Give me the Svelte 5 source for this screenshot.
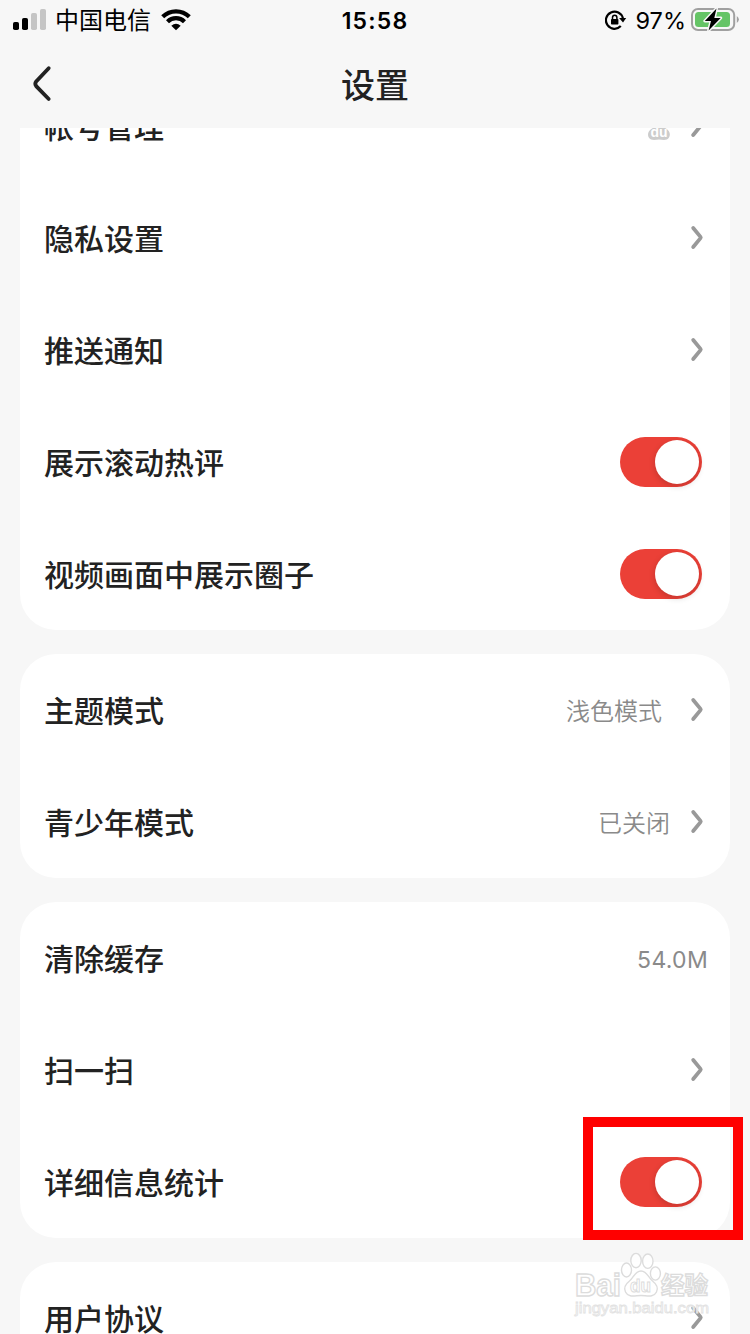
<script lang="ts">
  type Row = { label: string, kind: 'link' | 'toggle' | 'value', value?: string, wide?: boolean, baidu?: boolean, marked?: boolean };

  const groups: Row[][] = [
    [
      { label: '帐号管理', kind: 'link', baidu: true },
      { label: '隐私设置', kind: 'link' },
      { label: '推送通知', kind: 'link' },
      { label: '展示滚动热评', kind: 'toggle' },
      { label: '视频画面中展示圈子', kind: 'toggle' },
    ],
    [
      { label: '主题模式', kind: 'link', value: '浅色模式', wide: true },
      { label: '青少年模式', kind: 'link', value: '已关闭' },
    ],
    [
      { label: '清除缓存', kind: 'value', value: '54.0M' },
      { label: '扫一扫', kind: 'link' },
      { label: '详细信息统计', kind: 'toggle', marked: true },
    ],
    [
      { label: '用户协议', kind: 'link' },
    ],
  ];
</script>

<div class="screen">
  <div class="statusbar">
    <div class="carrier">
      <svg width="34" height="22" viewBox="0 0 34 22">
        <rect x="0" y="13" width="6" height="8" rx="1.8" />
        <rect x="9" y="9" width="6" height="12" rx="1.8" />
        <rect class="weak" x="18" y="4" width="6" height="17" rx="1.8" />
        <rect class="weak" x="27" y="0" width="6" height="21" rx="1.8" />
      </svg>
      <span class="name">中国电信</span>
      <svg class="wifi" width="30" height="22" viewBox="0 0 30 22">
        <path class="arc" d="M1.7 7.8 A18.8 18.8 0 0 1 28.3 7.8" />
        <path class="arc" d="M6.5 12.7 A12 12 0 0 1 23.5 12.7" />
        <path d="M10.3 16.7 Q15 12.8 19.7 16.7 L15 21.3 Z" />
      </svg>
    </div>
    <div class="clock">15:58</div>
    <div class="power">
      <svg width="22" height="22" viewBox="0 0 22 22">
        <path class="ring" d="M15.8 17.1 A8.6 8.6 0 1 1 17.9 9.2" />
        <path d="M14.1 9.1 H21.2 L18 13.4 Z" />
        <rect x="6" y="10" width="7.4" height="5.6" rx="0.8" />
        <path class="shackle" d="M7.5 10.4 V8.6 A2.2 2.4 0 0 1 11.9 8.6 V10.4" />
      </svg>
      <span class="percent">97%</span>
      <svg class="battery" width="49" height="25" viewBox="0 0 49 25">
        <rect class="case" x="1" y="2" width="42.2" height="21" rx="6" />
        <path class="cap" d="M45.8 9 Q50 12.5 45.8 16 Z" />
        <rect class="charge" x="4" y="5" width="35" height="15" rx="3.5" />
        <path class="bolt" d="M25.5 1.6 L13.8 14 H20 L17.6 23.4 L29.7 10.9 H23.3 Z" />
      </svg>
    </div>
  </div>

  <div class="titlebar">
    <svg class="back" width="22" height="38" viewBox="0 0 22 38">
      <path d="M16.7 3.2 L4.2 16.4 Q2.4 18.8 4.2 21.2 L16.7 34" />
    </svg>
    <span class="title">设置</span>
  </div>

  <div class="content">
    {#each groups as rows}
      <div class="group">
        {#each rows as row}
          <div class="row">
            <span class="label">{row.label}</span>
            {#if row.baidu}
              <svg class="baidu" width="24" height="26" viewBox="0 0 24 26">
                <ellipse cx="8" cy="4" rx="3" ry="4" />
                <ellipse cx="15" cy="4" rx="3" ry="4" />
                <ellipse cx="3" cy="9" rx="2.5" ry="3.5" />
                <ellipse cx="21" cy="9" rx="2.5" ry="3.5" />
                <path d="M12 9 C15.5 9 16.4 12 19.4 13.8 C23 16 23.6 20 22 22.5 C20 26 15.5 24.6 12 24.6 C8.5 24.6 4 26 1.8 22.5 C.2 20 1 16 4.6 13.8 C7.6 12 8.5 9 12 9 Z" />
                <text x="12" y="22" text-anchor="middle">du</text>
              </svg>
            {/if}
            {#if row.value}
              <span class="value" class:wide={row.wide} class:last={row.kind === 'value'}>{row.value}</span>
            {/if}
            {#if row.kind === 'link'}
              <svg class="chevron" width="14" height="26" viewBox="0 0 14 26">
                <path d="M3.2 3 L10.5 11.9 Q11 12.5 10.5 13.1 L3.2 22" />
              </svg>
            {:else if row.kind === 'toggle'}
              <div class="toggle">
                <div class="knob"></div>
                {#if row.marked}
                  <div class="mark"></div>
                {/if}
              </div>
            {/if}
          </div>
        {/each}
      </div>
    {/each}
  </div>

  <svg class="watermark" width="150" height="70" viewBox="0 0 150 70">
    <g class="big">
      <text x="5" y="45" textLength="46" lengthAdjust="spacingAndGlyphs">Bai</text>
      <text class="cn" x="91" y="43" textLength="47" lengthAdjust="spacingAndGlyphs">经验</text>
    </g>
    <g class="paw">
      <ellipse cx="56.5" cy="19" rx="5" ry="7" />
      <ellipse cx="66" cy="9.6" rx="5.2" ry="7.2" />
      <ellipse cx="77.8" cy="10.2" rx="5.2" ry="7.2" />
      <ellipse cx="85.4" cy="22.5" rx="5" ry="6.6" />
      <path d="M71 20 C77 20 78.5 27 82.5 30 C87 33.5 88.5 37 86.5 41 C83.5 47 77 44.5 71 44.5 C65 44.5 58.5 47 55.5 41 C53.5 37 55 33.5 59.5 30 C63.5 27 65 20 71 20 Z" />
    </g>
    <text class="du" x="60" y="41" textLength="21" lengthAdjust="spacingAndGlyphs">du</text>
    <text class="url" x="5" y="62" textLength="134" lengthAdjust="spacingAndGlyphs">jingyan.baidu.com</text>
  </svg>
</div>

<style>
  :global(body) {
    background: #f7f7f7;
  }
  .screen {
    position: relative;
    width: 750px;
    height: 1334px;
    overflow: hidden;
    display: flex;
    flex-direction: column;
    background: #f7f7f7;
    color: #222;
    font-family: Inter, "Noto Sans CJK SC", sans-serif;
  }
  svg {
    display: block;
    flex: none;
  }

  .statusbar {
    height: 40px;
    display: grid;
    grid-template-columns: 1fr auto 1fr;
    align-items: center;
    color: #000;
    font-size: 24px;
    line-height: 40px;
  }
  .carrier {
    display: flex;
    align-items: center;
    padding-left: 13px;

    & .weak {
      fill: #c5c5c5;
    }
  }
  .name {
    margin-left: 8px;
    padding-top: 2px;
    width: 96px;
    line-height: 38px;
    white-space: nowrap;
  }
  .wifi {
    margin-left: 10px;
  }
  .arc {
    fill: none;
    stroke: #000;
    stroke-width: 4.2;
  }
  .clock {
    padding-top: 2px;
    font-weight: 600;
    font-size: 23px;
    letter-spacing: 1.2px;
    line-height: 38px;
  }
  .power {
    display: flex;
    align-items: center;
    justify-content: flex-end;
    padding-right: 10px;
  }
  .ring, .shackle {
    fill: none;
    stroke: #000;
    stroke-width: 2.2;
  }
  .shackle {
    stroke-width: 1.5;
  }
  .percent {
    margin: 0 5px 0 9px;
    padding-top: 2px;
    font-size: 23.5px;
    line-height: 38px;
  }
  .battery {
    margin: -1px 0 0;
  }
  .case {
    fill: none;
    stroke: #a0a0a0;
    stroke-width: 2;
  }
  .cap {
    fill: #a0a0a0;
  }
  .charge {
    fill: #65c466;
  }
  .bolt {
    stroke: #f7f7f7;
    stroke-width: 3;
    paint-order: stroke;
    stroke-linejoin: round;
  }

  .titlebar {
    height: 88px;
    display: grid;
    grid-template-columns: 1fr auto 1fr;
    align-items: center;
  }
  .title {
    padding-top: 4px;
    font-size: 34px;
    font-weight: 500;
    line-height: 84px;
  }
  .back {
    margin-left: 32px;

    & path {
      fill: none;
      stroke: #222;
      stroke-width: 3.8;
      stroke-linecap: round;
    }
  }

  .content {
    flex: 1;
    min-height: 0;
    overflow: hidden;
    padding: 0 20px;
  }
  .group {
    margin-bottom: 24px;
    background: #fff;
    border-radius: 36px;

    /* the list is scrolled a little way under the title bar */
    &:first-child {
      margin-top: -58px;
    }
  }
  .row {
    height: 112px;
    padding: 0 25px 0 24px;
    display: flex;
    align-items: center;
  }
  .label {
    flex: 1;
    padding-top: 2px;
    font-size: 30px;
    font-weight: 500;
    line-height: 44px;
  }
  .value {
    margin-right: 20px;
    padding-top: 3px;
    color: #8a8a8a;
    font-size: 24px;
    font-weight: 350;
    line-height: 36px;

    &.wide {
      margin-right: 28px;
    }
    &.last {
      margin-right: -3px;
      font-size: 23px;
      font-weight: 400;
      letter-spacing: .3px;
    }
  }
  .chevron {
    margin-right: 1px;

    & path {
      fill: none;
      stroke: #999;
      stroke-width: 3.8;
      stroke-linecap: round;
    }
  }
  .baidu {
    margin: 4px 19px 0 0;
    fill: #ccc;

    & text {
      fill: #fff;
      font: 700 14px "Liberation Sans", sans-serif;
    }
  }
  .toggle {
    position: relative;
    width: 82px;
    height: 50px;
    margin-right: 3px;
    border-radius: 25px;
    background: #eb4037;
    display: flex;
    align-items: center;
    justify-content: flex-end;
  }
  .knob {
    width: 44px;
    height: 44px;
    margin-right: 3px;
    border-radius: 50%;
    background: #fff;
    box-shadow: 0 2px 6px rgba(0, 0, 0, .18);
  }
  .mark {
    position: absolute;
    left: -37px;
    top: -40px;
    width: 140px;
    height: 103px;
    border: 10px solid #f00;
    z-index: 1;
  }

  .watermark {
    position: absolute;
    left: 570px;
    top: 1251px;
    fill: #fff;
    fill-opacity: .8;
    stroke: #dcdcdc;
    stroke-width: 1.4;
    font-family: "Liberation Sans", "Noto Sans CJK SC", sans-serif;
    font-weight: 700;
  }
  .big {
    font-size: 31px;
  }
  .cn {
    font-size: 24px;
  }
  .du {
    font-size: 19px;
    stroke-width: 1;
  }
  .url {
    font-size: 15px;
    font-weight: 400;
    stroke: #e2e2e2;
    stroke-width: .8;
  }
</style>
